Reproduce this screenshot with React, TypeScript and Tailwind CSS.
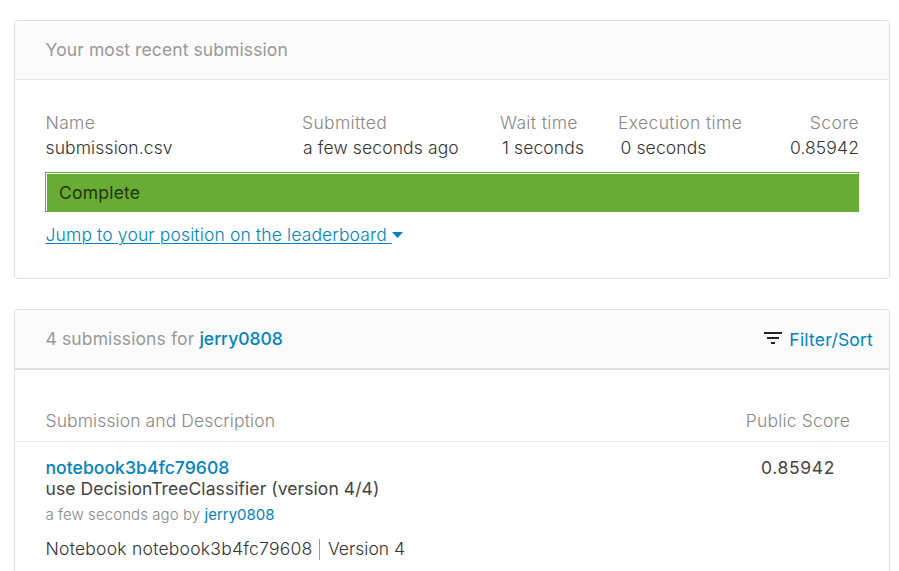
const stats = [
  { label: 'Name', value: 'submission.csv', box: 'w-[256.5px]', inner: '' },
  { label: 'Submitted', value: 'a few seconds ago', box: 'w-[198px]', inner: 'pl-px' },
  { label: 'Wait time', value: '1 seconds', box: 'w-[118px]', inner: 'pl-0.5' },
  { label: 'Execution time', value: '0 seconds', box: 'w-[139.5px]', inner: 'pl-[2.5px]' },
  { label: 'Score', value: '0.85942', box: 'flex-1 text-right', inner: '' },
];

function RecentSubmission() {
  return (
    <section className="h-[259px] shrink-0 rounded-[4px] border border-[#dedfe0]">
      <h2 className="flex h-[59px] items-center rounded-t-[3px] border-b border-[#e6e6e6] bg-[#fbfbfb] pl-[30.5px] tracking-[0.1px] text-[#999]">
        Your most recent submission
      </h2>
      <div className="px-[30px] pt-[30px]">
        <dl className="flex pl-[0.5px] font-light">
          {stats.map((s) => (
            <div key={s.label} className={s.box}>
              <dt className="h-[25px] leading-[25px] tracking-[0.36px] text-[#888]">{s.label}</dt>
              <dd className={`h-[25px] leading-[25px] tracking-[0.12px] text-[#333] ${s.inner}`}>{s.value}</dd>
            </div>
          ))}
        </dl>
        <div className="mt-3 h-10 border border-[#68ab35]">
          <div className="flex h-[38px] items-center border-l border-t border-white bg-[#68ab35] pl-3 pt-px tracking-[0.22px] text-[#203510]">
            Complete
          </div>
        </div>
        <a className="mt-[11px] flex h-6 items-center pl-[0.5px] font-light text-[#0083bd]">
          <span className="whitespace-pre tracking-[0.13px] underline decoration-1 underline-offset-2">Jump to your position on the leaderboard </span>
          <svg width="11" height="6" viewBox="0 0 11 6" fill="#0083bd"><path d="M0 0h11L5.5 6z" /></svg>
        </a>
      </div>
    </section>
  );
}

function Submissions() {
  return (
    <section className="h-[300px] shrink-0 rounded-t-[4px] border border-[#dedfe0]">
      <header className="flex h-[60px] items-center justify-between rounded-t-[3px] border-b-2 border-[#e0e0e0] bg-[#fbfbfb] pl-[30.5px] pr-4">
        <h2 className="tracking-[0.12px] text-[#999]">
          4 submissions for <a className="font-medium tracking-normal text-[#0083bd]">jerry0808</a>
        </h2>
        <a className="flex items-center gap-[7px] pt-0.5 tracking-[0.2px] text-[#0083bd]">
          <svg width="18" height="12" viewBox="0 0 18 12" fill="#222" className="mb-1">
            <path d="M0 0h18v2H0zM3 5h12v2H3zM7 10h4v2H7z" />
          </svg>
          Filter/Sort
        </a>
      </header>
      <div className="flex h-[72px] items-end justify-between border-b border-[#ebebeb] pb-2 pl-[30.5px] pr-[39px] font-light text-[#888]">
        <span className="tracking-[0.1px]">Submission and Description</span>
        <span className="tracking-[0.18px]">Public Score</span>
      </div>
      <div className="flex justify-between pl-[30.5px] pr-[54px] pt-[15px]">
        <div>
          <p className="h-[21px] leading-[21px]"><a className="font-medium tracking-[0.07px] text-[#0083bd]">notebook3b4fc79608</a></p>
          <p className="h-[21px] leading-[21px] tracking-[0.07px] text-[#444]">use DecisionTreeClassifier (version 4/4)</p>
          <p className="mt-1 h-6 text-[15px] leading-6 font-light text-[#888]">
            <span className="tracking-[0.08px]">a few seconds ago by </span><a className="font-normal text-[#0083bd]">jerry0808</a>
          </p>
          <p className="mt-[10px] flex h-6 items-center font-light text-[#333]">
            <span className="tracking-[0.24px]">Notebook notebook3b4fc79608</span>
            <i className="ml-[7px] mr-[7.5px] h-[21px] w-px shrink-0 bg-[#5fb0dc]" />
            Version 4
          </p>
        </div>
        <span className="h-[21px] leading-[21px] tracking-[0.65px] text-[#444]">0.85942</span>
      </div>
    </section>
  );
}

export default function App() {
  return (
    <main className="flex h-[571px] w-[899px] flex-col gap-[30px] overflow-hidden bg-white pl-[14px] pr-[9px] pt-5 font-['Inter',sans-serif] text-[17.5px] leading-6">
      <RecentSubmission />
      <Submissions />
    </main>
  );
}
